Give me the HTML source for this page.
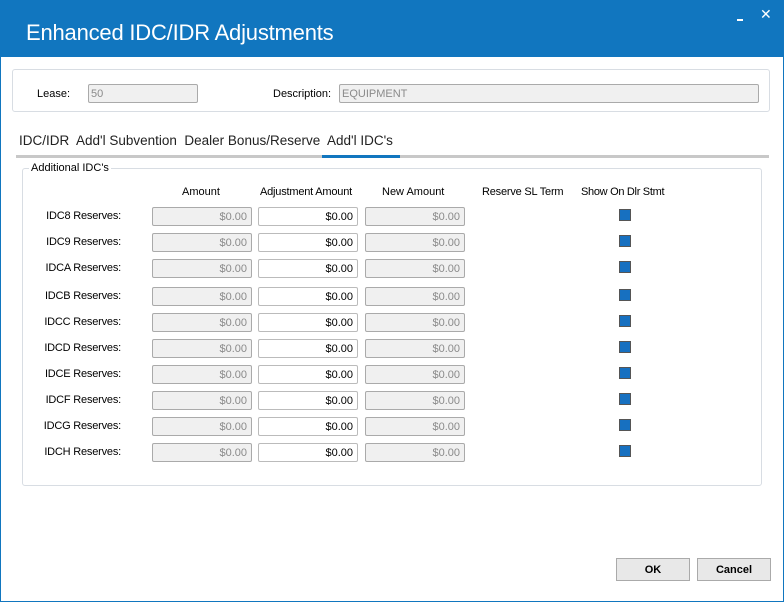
<!DOCTYPE html><html><head><style>
body{margin:0;width:784px;height:602px;background:#fff;font-family:"Liberation Sans",sans-serif;font-size:11px;position:relative;overflow:hidden;border:0}
.a{position:absolute}
.hdr{left:0;top:0;width:784px;height:57px;background:#1176bf;color:#fff}
.box{position:absolute;height:19px;border:1px solid #aaa;border-radius:2px;background:#f0f0f0;color:#8a8a8a;text-align:right;line-height:18px;padding-right:4px;box-sizing:border-box;font-size:11px}
.w{background:#fff;color:#000;border-color:#bbb}
.lbl{position:absolute;width:100px;left:21px;text-align:right;font-size:11px;letter-spacing:-0.2px}
.cb{position:absolute;left:619px;width:12px;height:12px;background:#1770c0;border:1px solid #555;box-sizing:border-box}
.btn{position:absolute;top:558px;width:74px;height:23px;border:1px solid #aaa;background:#e8e8e8;font-weight:bold;text-align:center;line-height:22px;box-sizing:border-box}
</style></head><body>
<div class="a hdr"><div class="a" style="left:26px;top:20px;font-size:22px;letter-spacing:-0.2px">Enhanced IDC/IDR Adjustments</div>
<div class="a" style="left:737px;top:19px;width:6px;height:2px;background:#fff"></div>
<div class="a" style="left:760px;top:6px;font-size:14px">✕</div></div>
<div class="a" style="left:0;top:57px;width:1px;height:545px;background:#1176bf"></div>
<div class="a" style="right:0;top:57px;width:1px;height:545px;background:#1176bf"></div>
<div class="a" style="left:0;bottom:0;width:784px;height:1px;background:#1176bf"></div>
<div class="a" style="left:12px;top:69px;width:758px;height:43px;border:1px solid #d8dde3;border-radius:3px;box-sizing:border-box"></div>
<div class="a" style="left:37px;top:88px">Lease:</div>
<div class="box" style="left:88px;top:84px;width:110px;text-align:left;padding-left:2px">50</div>
<div class="a" style="left:273px;top:88px">Description:</div>
<div class="box" style="left:339px;top:84px;width:420px;text-align:left;padding-left:2px">EQUIPMENT</div>
<div class="a" style="left:19px;top:133px;font-size:13.5px;color:#222">IDC/IDR&nbsp; Add'l Subvention&nbsp; Dealer Bonus/Reserve&nbsp; Add'l IDC's</div>
<div class="a" style="left:16px;top:155px;width:753px;height:3px;background:#c8c8c8"></div>
<div class="a" style="left:322px;top:155px;width:78px;height:3px;background:#1176bf"></div>
<div class="a" style="left:22px;top:168px;width:740px;height:318px;border:1px solid #d8dde3;border-radius:3px;box-sizing:border-box"></div>
<div class="a" style="left:29px;top:162px;background:#fff;padding:0 2px">Additional IDC's</div>
<div class="a" style="left:182px;top:186px">Amount</div>
<div class="a" style="left:260px;top:186px;letter-spacing:-0.2px">Adjustment Amount</div>
<div class="a" style="left:382px;top:186px">New Amount</div>
<div class="a" style="left:482px;top:186px;letter-spacing:-0.2px">Reserve SL Term</div>
<div class="a" style="left:581px;top:186px;letter-spacing:-0.3px">Show On Dlr Stmt</div>
<div id="rows"></div>
<script>
var n=["IDC8","IDC9","IDCA","IDCB","IDCC","IDCD","IDCE","IDCF","IDCG","IDCH"],c=[216,242,268,296,322,348,374,400,426,452],h="";
for(var i=0;i<10;i++){var t=c[i]-9;
h+='<div class="lbl" style="top:'+(t+3)+'px">'+n[i]+' Reserves:</div>'+
'<div class="box" style="left:152px;top:'+t+'px;width:100px">$0.00</div>'+
'<div class="box w" style="left:258px;top:'+t+'px;width:100px">$0.00</div>'+
'<div class="box" style="left:365px;top:'+t+'px;width:100px">$0.00</div>'+
'<div class="cb" style="top:'+(t+2)+'px"></div>';}
document.getElementById("rows").innerHTML=h;
</script>
<div class="btn" style="left:616px">OK</div>
<div class="btn" style="left:697px">Cancel</div>
</body></html>
